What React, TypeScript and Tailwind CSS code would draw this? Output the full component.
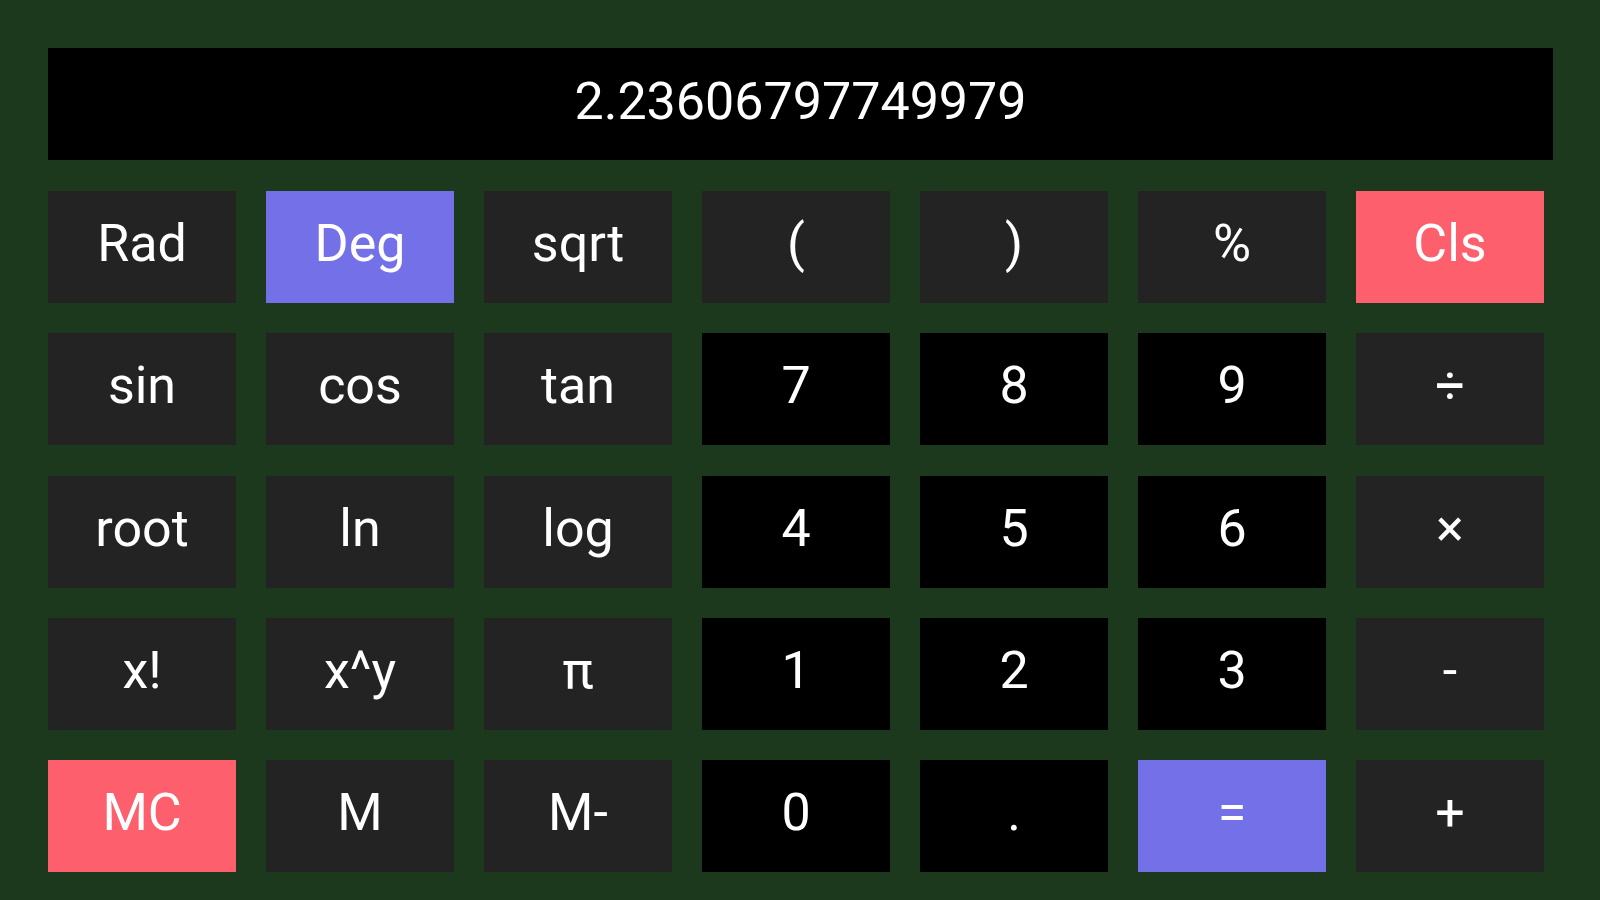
import React from "react";

type Kind = "fn" | "num" | "blue" | "red";

const rows: [string, Kind][][] = [
  [["Rad", "fn"], ["Deg", "blue"], ["sqrt", "fn"], ["(", "fn"], [")", "fn"], ["%", "fn"], ["Cls", "red"]],
  [["sin", "fn"], ["cos", "fn"], ["tan", "fn"], ["7", "num"], ["8", "num"], ["9", "num"], ["÷", "fn"]],
  [["root", "fn"], ["ln", "fn"], ["log", "fn"], ["4", "num"], ["5", "num"], ["6", "num"], ["×", "fn"]],
  [["x!", "fn"], ["x^y", "fn"], ["π", "fn"], ["1", "num"], ["2", "num"], ["3", "num"], ["-", "fn"]],
  [["MC", "red"], ["M", "fn"], ["M-", "fn"], ["0", "num"], [".", "num"], ["=", "blue"], ["+", "fn"]],
];

const bg: Record<Kind, string> = {
  fn: "bg-[#232323]",
  num: "bg-black",
  blue: "bg-[#7370e8]",
  red: "bg-[#fd5f6d]",
};

export default function App() {
  return (
    <div
      className="w-[1600px] h-[900px] bg-[#1c391e] pt-[48px] pl-[48px] overflow-hidden"
      style={{ fontFamily: "Roboto, 'Noto Sans', sans-serif" }}
    >
      <div className="w-[1505px] h-[112px] bg-black flex items-center justify-center text-white text-[52px] leading-none pb-[4px]">
        2.23606797749979
      </div>
      <div className="mt-[31px] w-[1496px] grid grid-cols-[repeat(7,188px)] grid-rows-[repeat(5,112px)] gap-x-[30px] gap-y-[30.3px]">
        {rows.flat().map(([label, kind], i) => (
          <div
            key={i}
            className={`${bg[kind]} flex items-center justify-center text-white text-[52px] leading-none pb-[6px]`}
          >
            {label}
          </div>
        ))}
      </div>
    </div>
  );
}
